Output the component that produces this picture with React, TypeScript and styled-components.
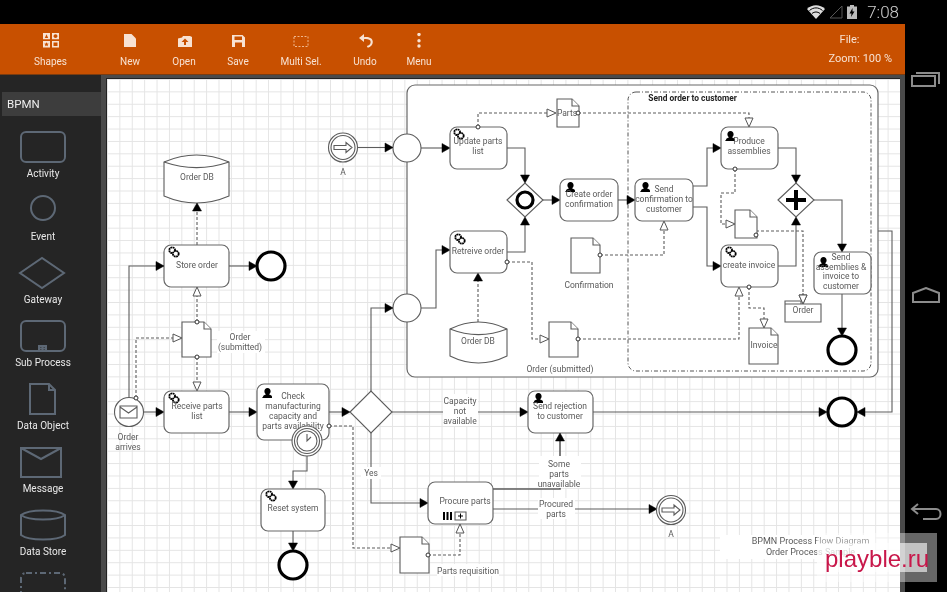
import React from "react";
import styled, { createGlobalStyle } from "styled-components";

type Pt = [number, number];

const GlobalStyle = createGlobalStyle`
	html, body {
		margin: 0;
		padding: 0;
		width: 947px;
		height: 592px;
		overflow: hidden;
		background: #000;
		font-family: Roboto, "Liberation Sans", sans-serif;
	}
`;

const LINE = "#5c5c5c";
const TEXT = "#5a5a5a";

/* ---- diagram helpers ---- */

const FlowLine = styled.polyline<{ $dashed?: boolean; $heavy?: boolean }>`
	fill: none;
	stroke: ${LINE};
	stroke-width: ${(p) => (p.$heavy ? 1.6 : 1.1)};
	stroke-dasharray: ${(p) => (p.$dashed ? "3 2" : "none")};
`;

const ArrowHead = styled.polygon<{ $open?: boolean }>`
	fill: ${(p) => (p.$open ? "#fff" : "#000")};
	stroke: ${(p) => (p.$open ? "#555" : "#000")};
	stroke-width: ${(p) => (p.$open ? 1 : 0.5)};
`;

const Port = styled.circle`
	fill: #fff;
	stroke: #333;
	stroke-width: 1;
`;

const Label = styled.text<{ $bold?: boolean; $size?: number }>`
	font-family: Roboto, "Liberation Sans", sans-serif;
	font-size: ${(p) => p.$size || 8.5}px;
	font-weight: ${(p) => (p.$bold ? 700 : 400)};
	fill: ${(p) => (p.$bold ? "#222" : TEXT)};
	text-anchor: middle;
`;

const Backing = styled.rect`
	fill: #fff;
`;

const TaskBox = styled.rect`
	fill: #fff;
	stroke: #686868;
	stroke-width: 1.2;
`;

const Shape = styled.path`
	fill: #fff;
	stroke: #5c5c5c;
	stroke-width: 1.1;
`;

const Ring = styled.circle<{ $heavy?: boolean }>`
	fill: #fff;
	stroke: ${(p) => (p.$heavy ? "#000" : "#5c5c5c")};
	stroke-width: ${(p) => (p.$heavy ? 3.2 : 1.1)};
`;

const Ink = styled.path`
	fill: #000;
	stroke: none;
`;

const GearRing = styled.circle`
	fill: #fff;
	stroke: #000;
	stroke-width: 1.8;
	stroke-dasharray: 1.8 0.5;
`;

function Flow({ pts, dashed, head, heavy }: { pts: Pt[]; dashed?: boolean; head?: "solid" | "open"; heavy?: boolean }) {
	const [tx, ty] = pts[pts.length - 1];
	const [px, py] = pts[pts.length - 2];
	const len = Math.hypot(tx - px, ty - py) || 1;
	const ux = (tx - px) / len;
	const uy = (ty - py) / len;
	const size = head === "open" ? 9 : 8;
	const bx = tx - ux * size;
	const by = ty - uy * size;
	const w = head === "open" ? 4 : 4.5;
	const line = head ? [...pts.slice(0, -1), [bx, by]] : pts;
	return (
		<g>
			<FlowLine $dashed={dashed} $heavy={heavy} points={line.map((p) => p.join(",")).join(" ")} />
			{head && (
				<ArrowHead
					$open={head === "open"}
					points={`${tx},${ty} ${bx - uy * w},${by + ux * w} ${bx + uy * w},${by - ux * w}`}
				/>
			)}
		</g>
	);
}

function Caption({ x, y, lines, step = 10, bold, size }: { x: number; y: number; lines: string[]; step?: number; bold?: boolean; size?: number }) {
	return (
		<>
			{lines.map((l, i) => (
				<Label key={i} x={x} y={y + i * step} $bold={bold} $size={size}>
					{l}
				</Label>
			))}
		</>
	);
}

function Gears({ x, y }: { x: number; y: number }) {
	return (
		<g>
			<GearRing cx={x - 1.8} cy={y - 1.8} r={2.9} />
			<GearRing cx={x + 1.8} cy={y + 1.8} r={2.9} />
		</g>
	);
}

function Person({ x, y }: { x: number; y: number }) {
	return (
		<Ink d={`M${x - 5} ${y + 6}h10v-1.2c0-1.6-2-2.1-3-2.6 1-.7 1.6-1.8 1.6-3 0-1.8-1.2-3.2-3.1-3.2s-3.1 1.4-3.1 3.2c0 1.2.6 2.3 1.6 3-1 .5-3 1-3 2.6z`} />
	);
}

function Task({ x, y, w, h, icon, ix, iy }: { x: number; y: number; w: number; h: number; icon?: "gear" | "user"; ix?: number; iy?: number }) {
	return (
		<>
			<TaskBox x={x} y={y} width={w} height={h} rx={7} />
			{icon === "gear" && <Gears x={ix ?? x + 10} y={iy ?? y + 7} />}
			{icon === "user" && <Person x={ix ?? x + 10} y={iy ?? y + 8} />}
		</>
	);
}

function DataDoc({ x, y, w, h }: { x: number; y: number; w: number; h: number }) {
	const c = 7;
	return (
		<>
			<Shape d={`M${x} ${y}h${w - c}l${c} ${c}v${h - c}h${-w}z`} />
			<Shape d={`M${x + w - c} ${y}v${c}h${c}`} />
		</>
	);
}

function Store({ x, y, w, h }: { x: number; y: number; w: number; h: number }) {
	const rim = 7;
	return (
		<>
			<Shape d={`M${x} ${y + rim}Q${x + w / 2} ${y - rim} ${x + w} ${y + rim}V${y + h - rim}Q${x + w / 2} ${y + h + rim} ${x} ${y + h - rim}Z`} />
			<Shape d={`M${x} ${y + rim}Q${x + w / 2} ${y + rim * 2.6} ${x + w} ${y + rim}`} style={{ fill: "none" }} />
		</>
	);
}

function LinkEvent({ x, y }: { x: number; y: number }) {
	return (
		<>
			<Ring cx={x} cy={y} r={14.5} />
			<Ring cx={x} cy={y} r={12} />
			<Shape d={`M${x - 9} ${y - 2}h12v-3l6 5-6 5v-3h-12z`} />
		</>
	);
}

function Gateway({ x, y, rx, ry }: { x: number; y: number; rx: number; ry: number }) {
	return <Shape d={`M${x - rx} ${y}L${x} ${y - ry}L${x + rx} ${y}L${x} ${y + ry}Z`} />;
}

function Diagram() {
	return (
		<DiagramSvg viewBox="107 79 793 513" width={793} height={513}>
			{/* pool and expanded sub process */}
			<TaskBox x={407} y={85} width={471} height={292} rx={8} />
			<DashFrame x={628} y={92} width={243} height={279} rx={8} />
			<Caption x={692.5} y={101} lines={["Send order to customer"]} bold size={8.4} />
			<Ring cx={407} cy={148} r={14} />
			<Ring cx={407} cy={308} r={14} />

			{/* left column */}
			<LinkEvent x={343} y={147.5} />
			<Caption x={343} y={175} lines={["A"]} />
			<Flow pts={[[358, 147.5], [393, 147.5]]} head="solid" />
			<Flow pts={[[421, 148], [450, 148]]} head="solid" />
			<Flow pts={[[421, 308], [436, 308], [436, 250], [450, 250]]} head="solid" />
			<Flow pts={[[371, 392], [371, 308], [393, 308]]} head="solid" />

			<Store x={164} y={155} w={65} h={48} />
			<Caption x={197} y={180} lines={["Order DB"]} />
			<Flow pts={[[197, 245], [197, 203]]} dashed head="solid" />
			<Task x={164} y={245} w={65} h={42} icon="gear" />
			<Caption x={197} y={268} lines={["Store order"]} />
			<Flow pts={[[229, 266], [257, 266]]} head="solid" />
			<Ring $heavy cx={271} cy={266} r={14} />
			<Flow pts={[[129, 398], [129, 266], [164, 266]]} head="solid" />
			<Flow pts={[[136, 398], [136, 338], [182, 338]]} dashed head="open" />

			<Flow pts={[[197, 322], [197, 287]]} dashed head="open" />
			<Flow pts={[[197, 357], [197, 391]]} dashed head="open" />
			<DataDoc x={182} y={322} w={29} h={35} />
			<Port cx={197} cy={322} r={2} />
			<Port cx={197} cy={357} r={2} />
			<Backing x={217} y={331} width={48} height={22} />
			<Caption x={240} y={340} lines={["Order", "(submitted)"]} />

			<Ring cx={129} cy={412} r={14.5} />
			<Shape d="M120 406h17v12h-17zM120 407l8.5 6 8.5-6" />
			<Port cx={136} cy={398} r={2} />
			<Caption x={128} y={440} lines={["Order", "arrives"]} />
			<Flow pts={[[143.5, 412], [164, 412]]} head="solid" />
			<Task x={164} y={391} w={65} h={42} icon="gear" />
			<Caption x={197} y={409} lines={["Receive parts", "list"]} />
			<Flow pts={[[229, 412], [257, 412]]} head="solid" />

			<Task x={257} y={384} w={72} h={56} icon="user" ix={267} iy={392} />
			<Caption x={293} y={399} lines={["Check", "manufacturing", "capacity and", "parts availability"]} />
			<Flow pts={[[307, 455], [307, 471], [293, 471], [293, 489]]} head="solid" />
			<Ring cx={307} cy={441} r={15} />
			<Ring cx={307} cy={441} r={12.5} />
			<Ring cx={307} cy={441} r={10} />
			<FlowLine points="307,434 307,441 311,437" />
			<Flow pts={[[329, 426], [353, 426], [353, 548], [400, 548]]} dashed head="open" />
			<Port cx={329} cy={426} r={2} />
			<Task x={261} y={489} w={64} h={42} icon="gear" />
			<Caption x={293} y={511} lines={["Reset system"]} />
			<Flow pts={[[293, 531], [293, 551]]} head="solid" />
			<Ring $heavy cx={293} cy={565} r={14} />

			{/* gateway and bottom lane */}
			<Flow pts={[[329, 412], [350, 412]]} head="solid" />
			<Flow pts={[[392, 412], [528, 412]]} head="solid" />
			<Gateway x={371} y={412} rx={21} ry={21} />
			<Backing x={443} y={394} width={35} height={32} />
			<Caption x={460} y={404} lines={["Capacity", "not", "available"]} />
			<Flow pts={[[371, 433], [371, 503], [428, 503]]} head="solid" />
			<Backing x={361} y={467} width={20} height={12} />
			<Caption x={371} y={476} lines={["Yes"]} />
			<Task x={528} y={391} w={65} h={42} icon="user" ix={538} iy={397} />
			<Caption x={560} y={409} lines={["Send rejection", "to customer"]} />
			<Flow pts={[[593, 412], [827, 412]]} head="solid" />
			<Flow pts={[[878, 231], [892, 231], [892, 412], [857, 412]]} head="solid" />
			<Ring $heavy cx={842} cy={412} r={14} />

			<Task x={428} y={482} w={65} h={42} />
			<Caption x={465} y={504} lines={["Procure parts"]} />
			<Ink d="M443 512h2v8h-2zM446.5 512h2v8h-2zM450 512h2v8h-2z" />
			<Shape d="M455 512h11v8h-11z" />
			<Ink d="M460 513.5h1v5h-1zM458 515.5h5v1h-5z" />
			<Flow pts={[[493, 489], [560, 489], [560, 433]]} head="solid" heavy />
			<Backing x={539} y={456} width={42} height={32} />
			<Caption x={559} y={467} lines={["Some", "parts", "unavailable"]} />
			<Flow pts={[[493, 509], [657, 509]]} head="solid" />
			<Backing x={538} y={498} width={37} height={21} />
			<Caption x={556} y={507} lines={["Procured", "parts"]} />
			<LinkEvent x={671} y={510} />
			<Caption x={671} y={537} lines={["A"]} />

			<DataDoc x={400} y={537} w={29} h={36} />
			<Flow pts={[[428, 555], [460, 555], [460, 524]]} dashed head="open" />
			<Port cx={428} cy={555} r={2} />
			<Backing x={437} y={564} width={62} height={12} />
			<Caption x={468} y={574} lines={["Parts requisition"]} />

			{/* inside the pool */}
			<Flow pts={[[478, 127], [478, 113], [556, 113]]} dashed head="open" />
			<Flow pts={[[578, 113], [749, 113], [749, 127]]} dashed head="open" />
			<DataDoc x={557} y={99} w={22} h={28} />
			<Caption x={567} y={116} lines={["Parts"]} />
			<Port cx={578} cy={113} r={2} />
			<Task x={450} y={127} w={57} h={42} icon="gear" ix={459} iy={134} />
			<Port cx={478} cy={127} r={2} />
			<Caption x={478} y={144} lines={["Update parts", "list"]} />
			<Flow pts={[[507, 148], [525, 148], [525, 183]]} head="solid" />

			<Flow pts={[[507, 252], [525, 252], [525, 217]]} head="solid" />
			<Flow pts={[[543, 200], [560, 200]]} head="solid" />
			<Gateway x={525} y={200} rx={18} ry={17} />
			<Ring $heavy cx={525} cy={200} r={8} />

			<Task x={560} y={179} w={58} h={42} icon="user" ix={570} iy={186} />
			<Caption x={589} y={197} lines={["Create order", "confirmation"]} />
			<Flow pts={[[618, 200], [635, 200]]} head="solid" />

			<Flow pts={[[478, 322], [478, 273]]} dashed head="solid" />
			<Task x={450} y={231} w={57} h={42} icon="gear" ix={460} iy={239} />
			<Caption x={478} y={254} lines={["Retreive order"]} />
			<Flow pts={[[507, 262], [532, 262], [532, 339], [549, 339]]} dashed head="open" />
			<Port cx={507} cy={262} r={2} />
			<Store x={450} y={322} w={57} h={41} />
			<Caption x={478} y={344} lines={["Order DB"]} />

			<Flow pts={[[600, 255], [664, 255], [664, 221]]} dashed head="open" />
			<DataDoc x={571} y={238} w={29} h={35} />
			<Port cx={600} cy={255} r={2} />
			<Caption x={589} y={288} lines={["Confirmation"]} />

			<Flow pts={[[578, 339], [739, 339], [739, 287]]} dashed head="open" />
			<DataDoc x={549} y={322} w={29} h={35} />
			<Port cx={578} cy={339} r={2} />
			<Caption x={560} y={372} lines={["Order (submitted)"]} />

			<Flow pts={[[693, 186], [707, 186], [707, 148], [721, 148]]} head="solid" />
			<Flow pts={[[693, 207], [707, 207], [707, 266], [721, 266]]} head="solid" />
			<Task x={635} y={179} w={58} h={42} icon="user" ix={645} iy={186} />
			<Caption x={664} y={192} lines={["Send", "confirmation to", "customer"]} />

			<Flow pts={[[735, 169], [735, 193], [721, 193], [721, 224], [735, 224]]} dashed head="open" />
			<Task x={721} y={127} w={57} h={42} icon="user" ix={730} iy={135} />
			<Port cx={735} cy={169} r={2} />
			<Caption x={749} y={144} lines={["Produce", "assemblies"]} />
			<Flow pts={[[778, 148], [796, 148], [796, 183]]} head="solid" />
			<Flow pts={[[778, 266], [796, 266], [796, 217]]} head="solid" />
			<Flow pts={[[814, 200], [842, 200], [842, 252]]} head="solid" />
			<Gateway x={796} y={200} rx={18} ry={17} />
			<Ink d="M794 190h4v8h8v4h-8v8h-4v-8h-8v-4h8z" />

			<Flow pts={[[756, 231], [803, 231], [803, 304]]} dashed head="open" />
			<DataDoc x={735} y={210} w={22} h={28} />
			<Port cx={756} cy={235} r={2} />

			<Flow pts={[[749, 287], [749, 308], [764, 308], [764, 328]]} dashed head="open" />
			<Task x={721} y={245} w={57} h={42} icon="gear" ix={731} iy={252} />
			<Port cx={749} cy={287} r={2} />
			<Caption x={749} y={268} lines={["create invoice"]} />
			<DataDoc x={749} y={328} w={29} h={36} />
			<Caption x={764} y={348} lines={["Invoice"]} />

			<Shape d="M785 304v-3h16v3M785 304h36v18h-36z" />
			<Caption x={803} y={313} lines={["Order"]} />
			<Flow pts={[[803, 293], [803, 304]]} dashed head="open" />

			<Task x={814} y={252} w={57} h={42} icon="user" ix={823} iy={261} />
			<Caption x={841} y={260} lines={["Send", "assemblies &", "invoice to", "customer"]} step={9.7} />
			<Flow pts={[[842, 294], [842, 336]]} head="solid" />
			<Ring $heavy cx={842} cy={350} r={14} />

			{/* sheet title */}
			<Backing x={720} y={535} width={155} height={24} />
			<Caption x={810.5} y={544} lines={["BPMN Process Flow Diagram", "Order Process Sample"]} step={11} size={9} />
		</DiagramSvg>
	);
}

/* ---- sidebar shapes ---- */

const paletteItems: { label: string; shape: React.ReactNode }[] = [
	{ label: "Activity", shape: <rect x="4" y="1" width="44" height="30" rx="5" /> },
	{ label: "Event", shape: <circle cx="26" cy="14" r="12" /> },
	{ label: "Gateway", shape: <path d="M3 16 25 1l22 15-22 15z" /> },
	{
		label: "Sub Process",
		shape: (
			<>
				<rect x="4" y="1" width="44" height="30" rx="5" />
				<path d="M22 26h7v5h-7zM25.5 26v5M22 28.5h7" />
			</>
		),
	},
	{ label: "Data Object", shape: <path d="M13 1h19l6 6v24H13zM32 1v6h6" /> },
	{ label: "Message", shape: <path d="M4 2h40v29H4zM4 2l20 11L44 2" /> },
	{
		label: "Data Store",
		shape: <path d="M4 6c8-6 36-6 44 0v20c-8 6-36 6-44 0zM4 6c8 6 36 6 44 0" />,
	},
	// only the top of this one is on screen, its label falls below the fold
	{ label: "", shape: <rect x="4" y="1" width="44" height="44" rx="5" strokeDasharray="6 3 2 3" /> },
];

/* ---- toolbar icons ---- */

const ShapesIcon = () => (
	<ToolSvg viewBox="0 0 16 16">
		<g transform="scale(1 .9)">
			<path
				fillRule="evenodd"
				d="M0 0h7v7H0zM3.5 1.500 1.800 5.500h3.400zM9 0h7v7H9zM12.500 1.500a2 2 0 1 0 .01 0zM0 9h7v7H0zM3.500 10.200l-.7 1.500-1.600.2 1.200 1.100-.3 1.600 1.400-.8 1.400.8-.3-1.600 1.200-1.100-1.600-.2zM9 9h7v7H9zM10.500 10.500v4h4v-4z"
			/>
		</g>
	</ToolSvg>
);
const NewIcon = () => (
	<ToolSvg viewBox="0 0 16 16">
		<path d="M2 1h7.500L14 5.500V14H2z" />
	</ToolSvg>
);
const OpenIcon = () => (
	<ToolSvg viewBox="0 0 16 16">
		<path fillRule="evenodd" d="M2 5.500 6 4.500 7 3h7l2 1v10H2zM9 5.500 5.500 9H8v3h2V9h2.500z" />
	</ToolSvg>
);
const SaveIcon = () => (
	<ToolSvg viewBox="0 0 16 16">
		<path fillRule="evenodd" d="M2 2h10.500L15 4.500V14H2zM4.500 3.500V7h7.500V3.500zM5 9.500V14h7V9.500z" />
	</ToolSvg>
);
const MultiIcon = () => (
	<ToolSvg viewBox="0 0 16 16">
		<rect x="1" y="3.500" width="14" height="10" fill="none" stroke="#f0b68c" strokeDasharray="2 1.500" />
	</ToolSvg>
);
const UndoIcon = () => (
	<ToolSvg viewBox="0 0 16 16">
		<path d="M7 1v3.200c4.500-.6 8.800.8 8.800 4.800 0 3-2.300 5-5 5.800l-1-1.800c2-.4 3.900-1.700 3.900-4 0-2.600-3.500-3.200-6.700-2.800V9L2 5z" />
	</ToolSvg>
);
const MenuIcon = () => (
	<ToolSvg viewBox="0 0 16 16">
		<circle cx="8" cy="1.500" r="1.700" />
		<circle cx="8" cy="7.700" r="1.700" />
		<circle cx="8" cy="13" r="1.700" />
	</ToolSvg>
);

const tools = [
	{ label: "New", width: 54, icon: <NewIcon /> },
	{ label: "Open", width: 54, icon: <OpenIcon /> },
	{ label: "Save", width: 54, icon: <SaveIcon /> },
	{ label: "Multi Sel.", width: 72, icon: <MultiIcon /> },
	{ label: "Undo", width: 56, icon: <UndoIcon /> },
	{ label: "Menu", width: 52, icon: <MenuIcon /> },
];

export default function App() {
	return (
		<>
			<GlobalStyle />
			<Screen>
				<StatusBar>
					<svg width="18" height="14" viewBox="0 0 18 14">
						<path fill="#ddd" d="M9 14 0 4c5-5 13-5 18 0z" />
						<path fill="none" stroke="#000" d="M2.500 5.500c4-3.500 9-3.500 13 0M5 8.500c2.500-2 5.500-2 8 0" />
					</svg>
					<svg width="14" height="14" viewBox="0 0 14 14">
						<path fill="none" stroke="#555" d="M13 1v12H1z" />
					</svg>
					<svg width="10" height="14" viewBox="0 0 10 14">
						<path fill="#bbb" d="M3 0h4v1.500h3V14H0V1.500h3z" />
						<path fill="#000" d="M5.500 3 2.500 8.500h2L4 12l3.500-5.500h-2z" />
					</svg>
					<Clock>7:08</Clock>
				</StatusBar>
				<Body>
					<Workspace>
						<Toolbar>
							<ToolButton $width={101}>
								<ShapesIcon />
								<span>Shapes</span>
							</ToolButton>
							<ToolGroup>
								{tools.map((t) => (
									<ToolButton key={t.label} $width={t.width}>
										{t.icon}
										<span>{t.label}</span>
									</ToolButton>
								))}
							</ToolGroup>
							<FileInfo>
								<FileName>File:</FileName>
								<span>Zoom: 100 %</span>
							</FileInfo>
						</Toolbar>
						<Main>
							<Sidebar>
								<SidebarTitle>BPMN</SidebarTitle>
								<PaletteList>
									{paletteItems.map((p, i) => (
										<PaletteItem key={i}>
											<PaletteSvg viewBox="0 0 52 32">{p.shape}</PaletteSvg>
											{p.label && <PaletteLabel>{p.label}</PaletteLabel>}
										</PaletteItem>
									))}
								</PaletteList>
							</Sidebar>
							<Canvas>
								<Diagram />
							</Canvas>
						</Main>
					</Workspace>
					<NavBar>
						<svg width="30" height="16" viewBox="0 0 30 16">
							<path fill="none" stroke="#8c8c8c" strokeWidth="2" d="M1 5h23v10H1zM5 2h23v11" />
						</svg>
						<svg width="30" height="16" viewBox="0 0 30 16">
							<path fill="none" stroke="#8c8c8c" strokeWidth="2" d="M2 6 15 1l13 5v9H2z" />
						</svg>
						<svg width="32" height="18" viewBox="0 0 32 18">
							<path fill="none" stroke="#8c8c8c" strokeWidth="2" d="M8 1 2 6l6 5M2 6h24c6 0 6 10 0 10H13" />
						</svg>
					</NavBar>
				</Body>
				<Watermark>
					<WatermarkText>playble.ru</WatermarkText>
				</Watermark>
			</Screen>
		</>
	);
}

const Screen = styled.div`
	position: relative;
	width: 947px;
	height: 592px;
	display: flex;
	flex-direction: column;
	overflow: hidden;
	background: #000;
	filter: blur(0.35px);
`;

const StatusBar = styled.div`
	height: 24px;
	flex: none;
	display: flex;
	align-items: center;
	justify-content: flex-end;
	gap: 4px;
	padding-right: 48px;
	background: #000;
`;

const Clock = styled.span`
	margin-left: 6px;
	font-size: 17px;
	font-weight: 300;
	color: #d0d0d0;
`;

const Body = styled.div`
	flex: 1;
	display: flex;
	min-height: 0;
`;

const Workspace = styled.div`
	width: 905px;
	display: flex;
	flex-direction: column;
`;

const Toolbar = styled.div`
	height: 51px;
	flex: none;
	display: flex;
	background: #c85000;
	border-bottom: 1px solid #7a3c10;
	box-sizing: border-box;
`;

const ToolGroup = styled.div`
	display: flex;
	margin-left: 2px;
`;

const ToolButton = styled.div<{ $width: number }>`
	width: ${(p) => p.$width}px;
	display: flex;
	flex-direction: column;
	align-items: center;
	padding-top: 9px;
	gap: 6px;
	box-sizing: border-box;
	color: #f8e2d2;
	font-size: 10px;
	line-height: 13px;
`;

const ToolSvg = styled.svg`
	width: 16px;
	height: 16px;
	fill: #f8e2d2;
`;

const FileInfo = styled.div`
	margin-left: auto;
	padding: 9px 13px 0 0;
	display: flex;
	flex-direction: column;
	gap: 6px;
	font-size: 11px;
	line-height: 13px;
	color: #f8e2d2;
`;

const FileName = styled.span`
	padding-left: 11px;
`;

const Main = styled.div`
	flex: 1;
	display: flex;
	min-height: 0;
	background: #4a4a4a;
`;

const Sidebar = styled.div`
	width: 101px;
	flex: none;
	padding-top: 17px;
	box-sizing: border-box;
	background: #252525;
	overflow: hidden;
`;

const SidebarTitle = styled.div`
	height: 24px;
	margin-left: 2px;
	padding-left: 5px;
	background: #3d3d3d;
	color: #eee;
	font-size: 11.5px;
	line-height: 25px;
`;

const PaletteList = styled.div`
	padding-top: 15px;
`;

const PaletteItem = styled.div`
	height: 63px;
	display: flex;
	flex-direction: column;
	align-items: center;
	padding-right: 15px;
	box-sizing: border-box;
`;

const PaletteSvg = styled.svg`
	width: 52px;
	height: 32px;
	flex: none;
	overflow: visible;
	fill: none;
	stroke: #5d6875;
	stroke-width: 2;
`;

const PaletteLabel = styled.span`
	margin-top: 4px;
	font-size: 10px;
	line-height: 13px;
	color: #e8e8e8;
`;

const Canvas = styled.div`
	margin: 3px 5px 0 5px;
	flex: 1;
	background-color: #fff;
	background-image: linear-gradient(#e4e4e4 1px, transparent 1px),
		linear-gradient(90deg, #e4e4e4 1px, transparent 1px);
	background-size: 12.4px 12.4px;
	border-top: 1px solid #222;
	border-left: 1px solid #222;
	overflow: hidden;
`;

const DiagramSvg = styled.svg`
	display: block;
`;

const DashFrame = styled.rect`
	fill: none;
	stroke: #555;
	stroke-width: 1;
	stroke-dasharray: 4 2 1 2;
`;

const NavBar = styled.div`
	width: 42px;
	flex: none;
	display: flex;
	flex-direction: column;
	align-items: center;
	gap: 200px;
	padding-top: 47px;
	box-sizing: border-box;
	background: #000;
`;

const Watermark = styled.div`
	position: absolute;
	right: 10px;
	bottom: 10px;
	width: 120px;
	height: 49px;
	display: flex;
	align-items: center;
	background: rgba(255, 255, 255, 0.4);
`;

const WatermarkText = styled.div`
	width: 110px;
	height: 29px;
	padding-left: 8px;
	box-sizing: border-box;
	background: rgba(255, 255, 255, 0.6);
	color: #c8174a;
	font-family: "Liberation Sans", Arial, sans-serif;
	font-size: 24px;
	line-height: 32px;
`;
